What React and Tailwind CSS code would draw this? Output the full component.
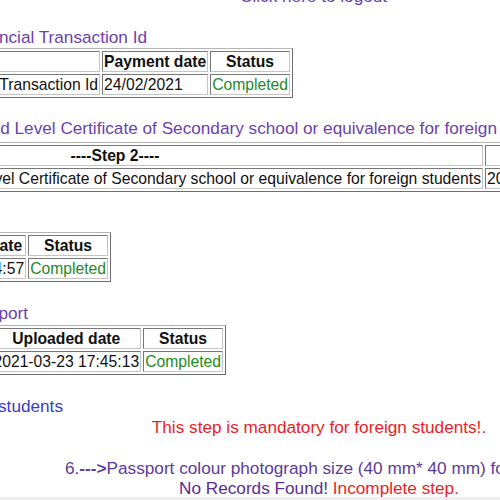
import React from 'react';

const tableCls =
  'border-separate border-spacing-[2px] border border-t-[#b4b4b4] border-l-[#b4b4b4] border-r-[#6e6e6e] border-b-[#6e6e6e] text-[15.7px] leading-[17px] text-[#111]';
const cellCls =
  'border border-t-[#777] border-l-[#777] border-r-[#c4c4c4] border-b-[#c4c4c4] p-[1px] whitespace-nowrap';
const headCls = `${cellCls} font-bold text-center`;
const done = 'text-[#1f8a1f]';

// big text lines; colour is given per line
const line = 'text-[17.2px] leading-[20px] whitespace-nowrap';
const purple = 'text-[#6c3fad]';

const App = () => {
  return (
    <div className="w-[500px] h-[500px] flex flex-col bg-white font-['Liberation_Sans',Arial,sans-serif]">
      <div className="flex-1 overflow-hidden flex flex-col">
        {/* logout link, mostly scrolled away */}
        <div className={`${line} ${purple} mt-[-14px] pl-[240px]`}>Click here to logout</div>

        <div className={`${line} ${purple} mt-[21px] w-[147px] flex justify-end`}>
          <span>4.---&gt;Financial Transaction Id</span>
        </div>
        <div className="mt-[1px] w-[293px] flex justify-end">
          <table className={tableCls}>
            <thead>
              <tr>
                <th className={headCls}>&nbsp;</th>
                <th className={`${headCls} w-[107px]`}>Payment date</th>
                <th className={`${headCls} w-[81px]`}>Status</th>
              </tr>
            </thead>
            <tbody>
              <tr>
                <td className={`${cellCls} text-right`}>Financial Transaction Id</td>
                <td className={cellCls}>24/02/2021</td>
                <td className={`${cellCls} ${done}`}>Completed</td>
              </tr>
            </tbody>
          </table>
        </div>

        <div className={`${line} ${purple} mt-[20px] w-[497px] flex justify-end`}>
          <span>2.---&gt;Advanced Level Certificate of Secondary school or equivalence for foreign</span>
        </div>
        <div className="mt-[4px] ml-[-256px] w-max">
          <table className={tableCls}>
            <thead>
              <tr>
                <th className={`${headCls} w-[736px]`}>----Step 2----</th>
                <th className={headCls}>Uploaded date</th>
                <th className={headCls}>Status</th>
              </tr>
            </thead>
            <tbody>
              <tr>
                <td className={`${cellCls} text-right`}>
                  Advanced Level Certificate of Secondary school or equivalence for foreign students
                </td>
                <td className={cellCls}>2021-03-23 17:40:05</td>
                <td className={`${cellCls} ${done}`}>Completed</td>
              </tr>
            </tbody>
          </table>
        </div>

        <div className="mt-[40px] w-[111px] flex justify-end">
          <table className={tableCls}>
            <thead>
              <tr>
                <th className={`${headCls} text-right pr-[3px]`}>Uploaded date</th>
                <th className={`${headCls} w-[81px]`}>Status</th>
              </tr>
            </thead>
            <tbody>
              <tr>
                <td className={`${cellCls} text-right`}>2021-03-23 17:44:57</td>
                <td className={`${cellCls} ${done}`}>Completed</td>
              </tr>
            </tbody>
          </table>
        </div>

        <div className={`${line} ${purple} mt-[21px] w-[28px] flex justify-end`}>
          <span>3.---&gt;Passport</span>
        </div>
        <div className="mt-[2px] w-[226px] flex justify-end">
          <table className={tableCls}>
            <thead>
              <tr>
                <th className={headCls}>Uploaded date</th>
                <th className={`${headCls} w-[81px]`}>Status</th>
              </tr>
            </thead>
            <tbody>
              <tr>
                <td className={`${cellCls} text-right`}>2021-03-23 17:45:13</td>
                <td className={`${cellCls} ${done}`}>Completed</td>
              </tr>
            </tbody>
          </table>
        </div>

        <div className={`${line} text-[#3a38cc] mt-[21px] w-[63px] flex justify-end`}>
          <span>5.---&gt;Residence permit for foreign students</span>
        </div>
        <div className={`${line} text-[#ea1d25] mt-[1px] w-[638px] text-center`}>
          This step is mandatory for foreign students!.
        </div>

        <div className={`${line} text-[#5e3a9a] mt-[21px] pl-[65px]`}>
          6.<span className="font-bold">---&gt;</span>Passport colour photograph size (40 mm* 40 mm) for foreign students
        </div>
        <div className={`${line} text-[#5a2d91] w-[638px] text-center`}>
          No Records Found! <span className="text-[#ea1d25]">Incomplete step.</span>
        </div>
      </div>
      <div className="h-[3px] bg-[#efefef]" />
    </div>
  );
};

export default App;
